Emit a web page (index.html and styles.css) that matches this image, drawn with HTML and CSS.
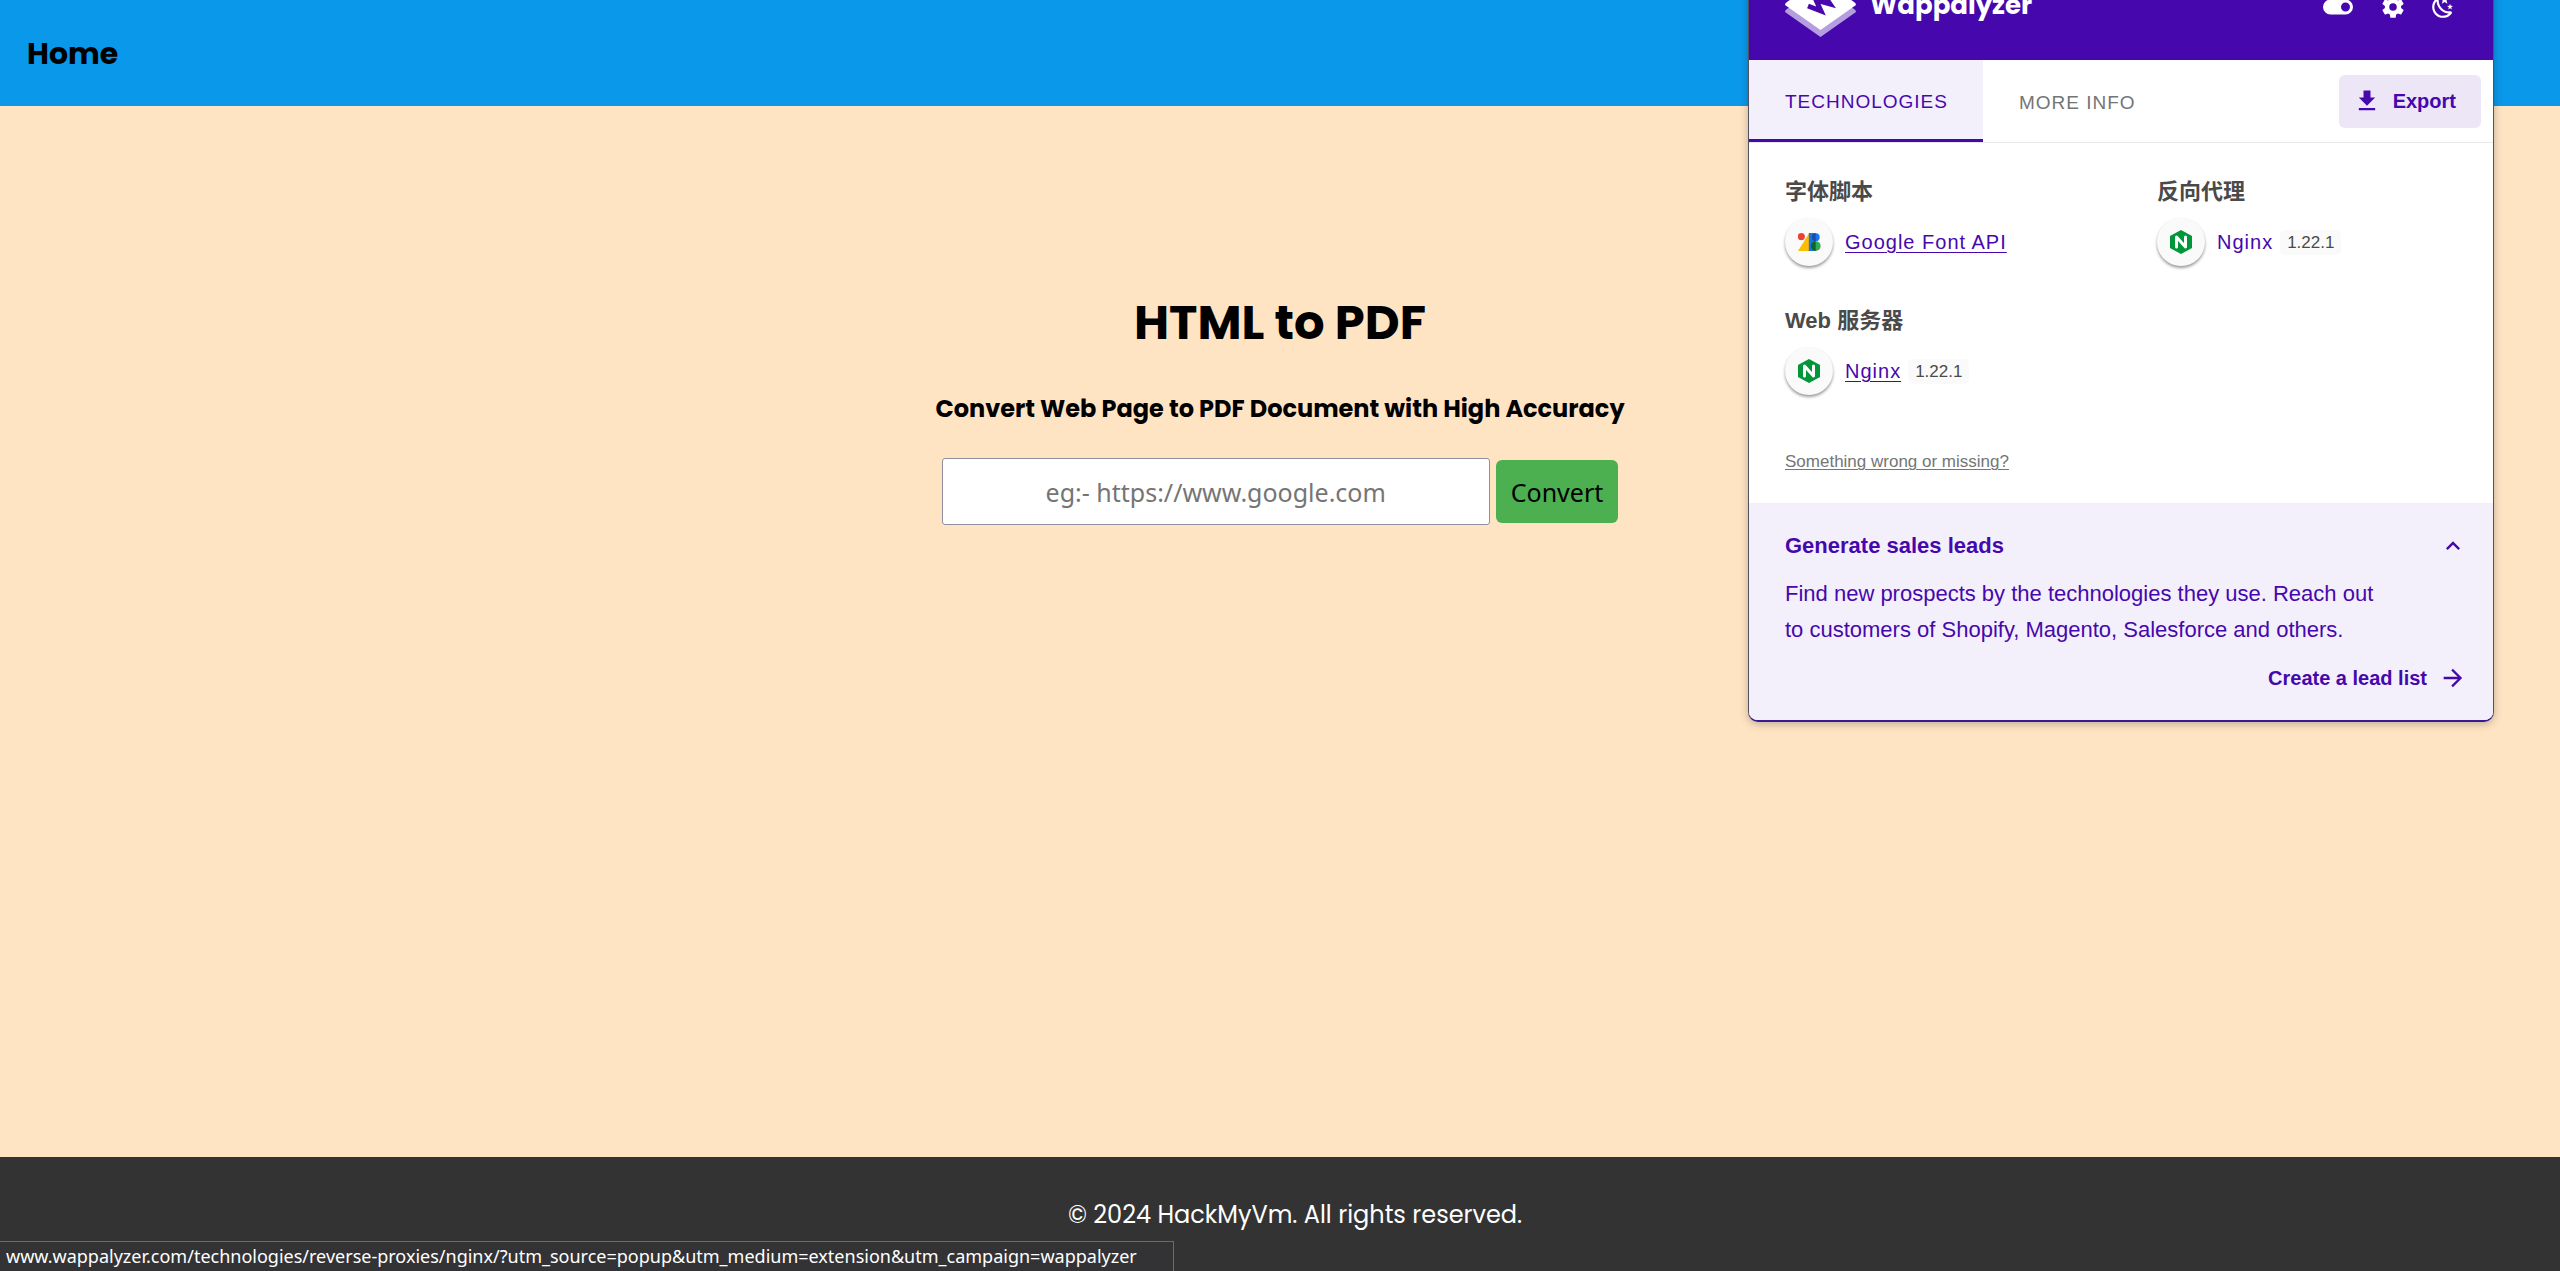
FILE: index.html
```html
<!DOCTYPE html>
<html lang="en">
<head>
<meta charset="utf-8">
<title>HTML to PDF</title>
<link rel="stylesheet" href="styles.css">
</head>
<body>
<header class="site-header"><a class="home-link" href="#">Home</a></header>

<main class="converter">
  <h1 class="converter-title">HTML to PDF</h1>
  <h2 class="converter-subtitle">Convert Web Page to PDF Document with High Accuracy</h2>
  <form class="converter-form">
    <input class="url-input" type="text" aria-label="Web page address" placeholder="eg:- https://www.google.com">
    <button class="convert-button" type="button">Convert</button>
  </form>
</main>

<footer class="site-footer"><p class="copyright">© 2024 HackMyVm. All rights reserved.</p></footer>

<aside class="popup">
  <div class="popup-header">
    <svg class="brand-logo" viewBox="0 0 71 60" aria-hidden="true">
      <path fill="#b59ee0" d="M0 35 Q0 33 2 32 L35.500 10 L69 32 Q71 33 71 35 L35.500 60 Z"/>
      <path fill="#fff" d="M0 28 Q0 26 2 25 L35.500 1 L69 25 Q71 26 71 28 L35.500 53 Z"/>
      <path fill="none" stroke="#4608ad" stroke-width="5" d="M23 29 L36 34 L31 23 L45 27 L36 14"/>
    </svg>
    <span class="brand-name">Wappalyzer</span>
    <div class="popup-actions">
      <button class="icon-button" type="button" aria-label="Toggle"><svg class="icon icon-toggle" viewBox="0 0 24 24"><path d="M17,7H7A5,5 0 0,0 2,12A5,5 0 0,0 7,17H17A5,5 0 0,0 22,12A5,5 0 0,0 17,7M17,15A3,3 0 0,1 14,12A3,3 0 0,1 17,9A3,3 0 0,1 20,12A3,3 0 0,1 17,15Z"/></svg></button>
      <button class="icon-button" type="button" aria-label="Settings"><svg class="icon icon-small" viewBox="0 0 24 24"><path d="M12,15.5A3.5,3.5 0 0,1 8.5,12A3.5,3.5 0 0,1 12,8.500A3.5,3.5 0 0,1 15.5,12A3.5,3.5 0 0,1 12,15.5M19.43,12.97C19.47,12.65 19.5,12.33 19.5,12C19.5,11.67 19.47,11.34 19.43,11L21.54,9.37C21.73,9.22 21.78,8.95 21.66,8.73L19.66,5.27C19.54,5.05 19.27,4.96 19.05,5.05L16.56,6.05C16.04,5.66 15.5,5.32 14.87,5.07L14.5,2.42C14.46,2.18 14.25,2 14,2H10C9.75,2 9.54,2.18 9.5,2.42L9.13,5.07C8.5,5.32 7.96,5.66 7.44,6.05L4.95,5.05C4.73,4.96 4.46,5.05 4.34,5.27L2.34,8.73C2.21,8.95 2.27,9.22 2.46,9.37L4.57,11C4.53,11.34 4.5,11.67 4.5,12C4.5,12.33 4.53,12.65 4.57,12.97L2.46,14.63C2.27,14.78 2.21,15.05 2.34,15.27L4.34,18.73C4.46,18.95 4.73,19.03 4.95,18.95L7.44,17.94C7.96,18.34 8.5,18.68 9.13,18.93L9.5,21.58C9.54,21.82 9.75,22 10,22H14C14.25,22 14.46,21.82 14.5,21.58L14.87,18.93C15.5,18.67 16.04,18.34 16.56,17.94L19.05,18.95C19.27,19.03 19.54,18.95 19.66,18.73L21.66,15.27C21.78,15.05 21.73,14.78 21.54,14.63L19.43,12.97Z"/></svg></button>
      <button class="icon-button" type="button" aria-label="Dark mode"><svg class="icon icon-small" viewBox="0 0 24 24"><path d="M17.75,4.09L15.22,6.03L16.13,9.09L13.5,7.28L10.87,9.09L11.78,6.03L9.25,4.09L12.44,4L13.5,1L14.56,4L17.75,4.09M21.25,11L19.61,12.25L20.2,14.23L18.5,13.06L16.8,14.23L17.39,12.25L15.75,11L17.81,10.95L18.5,9L19.19,10.95L21.25,11M18.97,15.95C19.8,15.87 20.69,17.05 20.16,17.8C19.84,18.25 19.5,18.67 19.08,19.07C15.17,23 8.84,23 4.94,19.07C1.03,15.17 1.03,8.83 4.94,4.93C5.34,4.53 5.76,4.17 6.21,3.85C6.96,3.32 8.14,4.21 8.06,5.04C7.79,7.9 8.75,10.87 10.95,13.06C13.14,15.26 16.1,16.22 18.97,15.95M17.33,17.97C14.5,17.81 11.7,16.64 9.53,14.5C7.36,12.31 6.2,9.5 6.04,6.68C3.23,9.82 3.34,14.64 6.35,17.66C9.37,20.67 14.19,20.78 17.33,17.97Z"/></svg></button>
    </div>
  </div>

  <nav class="tabs">
    <button class="tab tab-active" type="button">TECHNOLOGIES</button>
    <button class="tab" type="button">MORE INFO</button>
    <button class="export-button" type="button"><svg class="icon icon-large" viewBox="0 0 24 24" aria-hidden="true"><path d="M5,20H19V18H5M19,9H15V3H9V9H5L12,16L19,9Z"/></svg>Export</button>
  </nav>

  <div class="technologies">
    <section class="category">
      <h3 class="category-title">字体脚本</h3>
      <div class="technology">
        <span class="technology-icon"><svg class="icon-fonts" viewBox="0 0 70 55" aria-hidden="true">
          <path fill="#fbbc04" d="M0 55 L34 0 V55 Z"/><circle fill="#ea4335" cx="10" cy="11" r="11"/>
          <rect fill="#1a73e8" x="33" width="21" height="55"/>
          <circle fill="#1a73e8" cx="54" cy="13" r="12"/><path fill="#174ea6" d="M54 1 A12 12 0 0 0 54 25 Z"/>
          <circle fill="#34a853" cx="54" cy="40" r="15"/><path fill="#0d652d" d="M54 25 A15 15 0 0 0 54 55 Z"/>
        </svg></span>
        <a class="technology-link underlined" href="#">Google Font API</a>
      </div>
    </section>
    <section class="category">
      <h3 class="category-title">反向代理</h3>
      <div class="technology">
        <span class="technology-icon"><svg class="icon-nginx" viewBox="0 0 22 24" aria-hidden="true"><path fill="#009639" d="M11 0 L22 6 V18 L11 24 L0 18 V6 Z"/><path fill="none" stroke="#fff" stroke-width="3" stroke-linecap="round" stroke-linejoin="round" d="M6.500 17 V7 L15.500 17 V7"/></svg></span>
        <a class="technology-link" href="#">Nginx</a>
        <span class="version">1.22.1</span>
      </div>
    </section>
    <section class="category">
      <h3 class="category-title">Web 服务器</h3>
      <div class="technology">
        <span class="technology-icon"><svg class="icon-nginx" viewBox="0 0 22 24" aria-hidden="true"><path fill="#009639" d="M11 0 L22 6 V18 L11 24 L0 18 V6 Z"/><path fill="none" stroke="#fff" stroke-width="3" stroke-linecap="round" stroke-linejoin="round" d="M6.500 17 V7 L15.500 17 V7"/></svg></span>
        <a class="technology-link underlined" href="#">Nginx</a>
        <span class="version">1.22.1</span>
      </div>
    </section>
  </div>
  <div class="feedback"><a class="feedback-link" href="#">Something wrong or missing?</a></div>

  <section class="leads">
    <div class="leads-heading">
      <h3 class="leads-title">Generate sales leads</h3>
      <button class="icon-button" type="button" aria-label="Collapse"><svg class="icon icon-large" viewBox="0 0 24 24"><path d="M7.41,15.41L12,10.83L16.59,15.41L18,14L12,8L6,14L7.41,15.41Z"/></svg></button>
    </div>
    <p class="leads-text">Find new prospects by the technologies they use. Reach out<br>to customers of Shopify, Magento, Salesforce and others.</p>
    <a class="leads-link" href="#">Create a lead list<svg class="icon icon-large" viewBox="0 0 24 24" aria-hidden="true"><path d="M4,11V13H16L10.5,18.5L11.92,19.92L19.84,12L11.92,4.08L10.5,5.5L16,11H4Z"/></svg></a>
  </section>
</aside>

<div class="status-bar">www.wappalyzer.com/technologies/reverse-proxies/nginx/?utm_source=popup&amp;utm_medium=extension&amp;utm_campaign=wappalyzer</div>
</body>
</html>
```
FILE: styles.css
```css
* { box-sizing: border-box; }

body {
  margin: 0;
  min-height: 100vh;
  display: flex;
  flex-direction: column;
  position: relative;
  overflow-x: hidden;
  background: #ffe4c4;
  color: #000;
  font-family: Poppins, Inter, sans-serif;
}

h1, h2, h3, p { margin: 0; }
a { color: inherit; text-decoration: none; }
button { border: 0; padding: 0; background: none; color: inherit; font: inherit; }

.site-header {
  display: flex;
  align-items: center;
  padding: 33px 27px 31px;
  background: #0a98eb;
}
.home-link { font-size: 30px; line-height: 42px; font-weight: 700; }

.converter {
  flex: 1;
  display: flex;
  flex-direction: column;
  align-items: center;
  padding-top: 181px;
}
.converter-title { font-size: 48px; line-height: 72px; font-weight: 700; }
.converter-subtitle { margin-top: 32px; font-size: 24px; line-height: 36px; font-weight: 700; }
.converter-form { display: flex; align-items: center; gap: 6px; margin-top: 31px; }
.url-input, .convert-button { font-family: Tahoma, "Noto Sans", sans-serif; font-size: 25px; }
.url-input {
  width: 548px;
  height: 67px;
  border: 1px solid #8f8f9d;
  border-radius: 3px;
  background: #fff;
  text-align: center;
}
.url-input::placeholder { color: #757575; opacity: 1; }
.convert-button { height: 63px; padding: 0 15px; border-radius: 6px; background: #4caf50; }

.site-footer { padding: 40px 0 38px 30px; background: #333; color: #fff; text-align: center; }
.copyright { font-size: 24px; line-height: 36px; }

.popup {
  position: absolute;
  top: -48px;
  right: 66px;
  width: 746px;
  border: 1px solid #52525e;
  border-bottom: 2px solid #3a1a90;
  border-radius: 10px;
  overflow: hidden;
  box-shadow: 0 2px 8px rgba(0, 0, 0, 0.25);
  background: #fff;
  color: #4608ad;
  font-family: "Liberation Sans", "Noto Sans CJK SC", sans-serif;
}
.icon { display: block; fill: currentColor; }
.icon-toggle { width: 36px; height: 36px; }
.icon-small { width: 26px; height: 26px; }
.icon-large { width: 28px; height: 28px; }

.popup-header {
  display: flex;
  align-items: center;
  height: 107px;
  padding: 0 37px 0 36px;
  background: #4608ad;
  color: #fff;
}
.brand-logo { width: 71px; height: 60px; }
.brand-name {
  margin-left: 14px;
  padding-bottom: 4px;
  font-family: Poppins, Inter, sans-serif;
  font-size: 26px;
  line-height: 36px;
  font-weight: 700;
}
.popup-actions { display: flex; align-items: center; gap: 24px; margin-left: auto; }

.tabs {
  display: flex;
  align-items: center;
  height: 83px;
  padding-right: 12px;
  border-bottom: 1px solid #e8e8e8;
}
.tab {
  height: 82px;
  padding: 4px 35px 0 36px;
  color: #757575;
  font-size: 19px;
  letter-spacing: 1px;
}
.tab-active { border-bottom: 3px solid #4608ad; background: #f4f0fb; color: #4608ad; }
.export-button {
  display: flex;
  align-items: center;
  gap: 12px;
  height: 53px;
  margin-left: auto;
  padding: 0 25px 0 14px;
  border-radius: 6px;
  background: #ece6f6;
  font-size: 20px;
  font-weight: 700;
}

.technologies {
  display: grid;
  grid-template-columns: 1fr 1fr;
  row-gap: 24px;
  padding-top: 31px;
}
.category { padding-left: 36px; }
.category-title { color: #4a4a4a; font-size: 22px; line-height: 36px; font-weight: 700; }
.technology { display: flex; align-items: center; padding: 8px 0 13px; }
.technology-icon {
  display: flex;
  align-items: center;
  justify-content: center;
  width: 48px;
  height: 48px;
  border-radius: 50%;
  background: #fafafa;
  box-shadow: 0 2px 3px rgba(0, 0, 0, 0.4);
}
.icon-fonts { width: 23px; height: 18px; }
.icon-nginx { width: 22px; height: 24px; }
.technology-link { margin-left: 12px; font-size: 20px; letter-spacing: 1px; }
.underlined { text-decoration: underline; text-decoration-thickness: 1px; text-underline-offset: 3px; }
.version {
  margin-left: 7px;
  padding: 1px 7px 0;
  border-radius: 5px;
  background: #fafafa;
  color: #4a4a4a;
  font-size: 17px;
  line-height: 24px;
}

.feedback { padding: 42px 36px 29px; line-height: 24px; }
.feedback-link {
  color: #757575;
  font-size: 17px;
  text-decoration: underline;
  text-decoration-thickness: 1px;
  text-underline-offset: 2px;
}

.leads { display: flex; flex-direction: column; padding: 25px 26px 24px 36px; background: #f4f0fb; }
.leads-heading { display: flex; align-items: center; justify-content: space-between; }
.leads-title { font-size: 22px; line-height: 36px; font-weight: 700; }
.leads-text { margin-top: 12px; font-size: 22px; line-height: 36px; }
.leads-link {
  display: flex;
  align-items: center;
  align-self: flex-end;
  gap: 12px;
  margin-top: 12px;
  font-size: 20px;
  line-height: 36px;
  font-weight: 700;
}

.status-bar {
  position: fixed;
  left: 0;
  bottom: 0;
  padding: 2px 36px 3px 6px;
  border-top: 1px solid #6b6b6f;
  border-right: 1px solid #6b6b6f;
  background: #333336;
  color: #fff;
  font-family: "Segoe UI", "Noto Sans", sans-serif;
  font-size: 18px;
  line-height: 24px;
}
```
